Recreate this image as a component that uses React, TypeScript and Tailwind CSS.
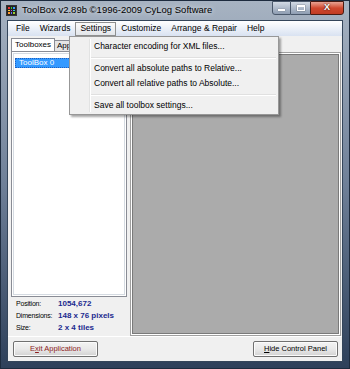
const sans = { fontFamily: '"Liberation Sans", Arial, sans-serif' };

const MENU = ["File", "Wizards", "Settings", "Customize", "Arrange & Repair", "Help"];

const InfoRow = ({ label, value }: { label: string; value: string }) => (
  <div className="flex h-[12px] items-center whitespace-nowrap">
    <span className="w-[42px] text-[7px] tracking-[-0.2px] text-black">{label}</span>
    <span className="text-[8px] font-bold text-[#1b2a8f]">{value}</span>
  </div>
);

const Button = ({ children }: { children: React.ReactNode }) => (
  <div className="flex h-[16px] w-[85px] items-center justify-center whitespace-nowrap rounded-[2px] border border-[#707070] bg-gradient-to-b from-[#f3f3f3] via-[#e9e9e9] to-[#d2d2d2] text-[7.5px] shadow-[inset_0_0_0_1px_#fbfbfb]">
    {children}
  </div>
);

const AppIcon = () => (
  <div className="grid h-[11px] w-[11px] grid-cols-3 gap-[1px] border border-[#333] bg-[#222] p-[1px]">
    <div className="bg-[#e33]" />
    <div className="bg-[#3c3]" />
    <div className="bg-[#39f]" />
    <div className="bg-[#fc3]" />
    <div className="bg-[#c3c]" />
    <div className="bg-[#3cc]" />
    <div className="bg-[#f93]" />
    <div className="bg-[#66f]" />
    <div className="bg-[#9c3]" />
  </div>
);

const Separator = () => (
  <div className="flex h-[7px] items-center pl-[21px] pr-[2px]">
    <div className="h-[2px] w-full border-t border-[#e0e0e0] border-b border-b-white" />
  </div>
);

const MenuItem = ({ text }: { text: string }) => (
  <div className="flex h-[15px] items-center whitespace-nowrap pl-[24px]">{text}</div>
);

const SettingsMenu = () => (
  <div className="absolute left-[68px] top-[35px] w-[210px] border border-[#979797] bg-[#f0f0f0] pb-[1px] pt-[2px] text-[8.5px] text-black shadow-[2px_2px_2px_rgba(0,0,0,0.35)]">
    <div className="absolute bottom-[2px] left-[19px] top-[2px] w-[2px] border-l border-[#e2e3e3] border-r border-r-white" />
    <MenuItem text="Character encoding for XML files..." />
    <Separator />
    <MenuItem text="Convert all absolute paths to Relative..." />
    <MenuItem text="Convert all relative paths to Absolute..." />
    <Separator />
    <MenuItem text="Save all toolbox settings..." />
  </div>
);

export default function App() {
  return (
    <div
      className="relative flex h-[369px] w-[350px] flex-col overflow-hidden border border-[#1d2b3e] bg-gradient-to-b from-[#a7b3c2] via-[#6f8098] to-[#2e405a]"
      style={sans}
    >
      {/* title bar */}
      <div className="flex h-[19px] shrink-0 items-center">
        <div className="ml-[5px] mr-[5px]">
          <AppIcon />
        </div>
        <span className="whitespace-nowrap text-[9.5px] text-black [text-shadow:0_0_5px_rgba(255,255,255,0.9)]">
          ToolBox v2.89b ©1996-2009 CyLog Software
        </span>
        <div className="ml-auto mr-[5px] flex self-start">
          <div className="flex h-[14px] w-[19px] items-center justify-center rounded-bl-[3px] border border-[#4a586b] bg-gradient-to-b from-[#d3dbe5] to-[#8e9db2]">
            <div className="mt-[4px] h-[2px] w-[7px] bg-white shadow-[0_0_1px_#333]" />
          </div>
          <div className="flex h-[14px] w-[19px] items-center justify-center border-y border-[#4a586b] bg-gradient-to-b from-[#d3dbe5] to-[#8e9db2]">
            <div className="h-[6px] w-[8px] border border-t-2 border-white shadow-[0_0_1px_#333]" />
          </div>
          <div className="flex h-[14px] w-[34px] items-center justify-center rounded-br-[3px] border border-[#4a1a12] bg-gradient-to-b from-[#e8a293] via-[#d0472e] to-[#c13b22] text-[9px] font-bold text-white [text-shadow:0_0_2px_#000]">
            X
          </div>
        </div>
      </div>

      {/* client area */}
      <div className="mx-[6px] mb-[6px] flex flex-1 flex-col border border-[#34455a] bg-[#f0f0f0]">
        {/* menu bar */}
        <div className="flex h-[15px] shrink-0 items-center whitespace-nowrap bg-gradient-to-b from-white to-[#d9e2f1] pl-[3px] text-[8.5px] text-black">
          {MENU.map((m) =>
            m === "Settings" ? (
              <span key={m} className="flex h-[14px] items-center border border-[#8e8f8f] bg-gradient-to-b from-[#fafafa] to-[#e3e6ea] px-[4px]">
                {m}
              </span>
            ) : (
              <span key={m} className="px-[5px]">
                {m}
              </span>
            )
          )}
        </div>

        <div className="flex flex-1 gap-[3px] pl-[3px] pr-[1px] pt-[2px]">
          {/* left control panel */}
          <div className="flex w-[116px] flex-col">
            <div className="flex h-[13px] items-end whitespace-nowrap text-[8px]">
              <div className="flex h-[13px] items-center border border-b-0 border-[#898c95] bg-white px-[3px]">Toolboxes</div>
              <div className="flex h-[11px] w-[16px] items-center overflow-hidden border border-b-0 border-l-0 border-[#898c95] bg-[#e5e5e5] pl-[2px]">App</div>
            </div>
            <div className="flex h-[246px] flex-col border border-[#898c95] bg-white p-[1px]">
              <div className="flex-1 border border-[#d5dbe2] px-[1px] pt-[4px]">
                <div className="flex h-[10px] items-center border border-dotted border-[#1f5fbf] bg-[#3399ff] pl-[3px] text-[8px] leading-none text-white">
                  ToolBox 0
                </div>
              </div>
            </div>
            <div className="flex flex-col pl-[5px] pt-[1px]">
              <InfoRow label="Position:" value="1054,672" />
              <InfoRow label="Dimensions:" value="148 x 76 pixels" />
              <InfoRow label="Size:" value="2 x 4 tiles" />
            </div>
          </div>

          {/* workspace */}
          <div className="mt-[14px] h-[284px] flex-1 border border-[#a0a0a0] bg-white p-[1px]">
            <div className="h-full border border-[#7a7a7a] bg-[#ababab]" />
          </div>
        </div>

        {/* bottom buttons */}
        <div className="flex h-[25px] shrink-0 items-center justify-between border-t border-white pl-[5px] pr-[4px]">
          <Button>
            <span className="text-[#8c1c1c]">
              E<u>x</u>it Application
            </span>
          </Button>
          <Button>
            <span className="text-black">
              <u>H</u>ide Control Panel
            </span>
          </Button>
        </div>
      </div>

      <SettingsMenu />
    </div>
  );
}
